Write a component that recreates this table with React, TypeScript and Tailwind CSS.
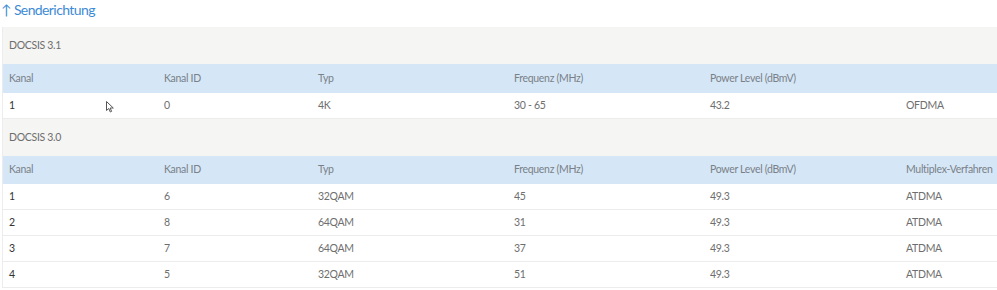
import React from "react";

const cols = ["w-[155px] shrink-0", "w-[154px] shrink-0", "w-[196px] shrink-0", "w-[196px] shrink-0", "w-[196px] shrink-0", "flex-1"];
const headers = ["Kanal", "Kanal ID", "Typ", "Frequenz (MHz)", "Power Level (dBmV)"];

function HeaderRow({ last, h }: { last: string; h: string }) {
  const cells = [...headers, last];
  return (
    <div className={`flex ${h} items-center bg-[#d5e7f6] text-[#7a8088]`}>
      {cells.map((c, i) => (
        <div key={i} className={`${cols[i]} pl-[6px] whitespace-nowrap`}>{c}</div>
      ))}
    </div>
  );
}

function DataRow({ cells, cursor }: { cells: string[]; cursor?: boolean }) {
  return (
    <div className="relative flex h-[26px] items-center border-b border-[#ececec] bg-white text-[#6e6e6e]">
      {cells.map((c, i) => (
        <div key={i} className={`${cols[i]} pl-[6px] whitespace-nowrap ${i === 0 ? "text-[#333]" : ""}`}>{c}</div>
      ))}
      {cursor && (
        <svg className="absolute left-[103px] top-[8px]" width="8" height="12" viewBox="0 0 8 12">
          <path d="M0.5 0.5 L0.5 9.5 L2.8 7.5 L4.3 11 L5.6 10.4 L4.2 7 L7.3 7 Z" fill="white" stroke="#555" strokeWidth="1" />
        </svg>
      )}
    </div>
  );
}

function Section({ title }: { title: string }) {
  return (
    <div className="flex h-[37px] items-center bg-[#f5f5f3] pl-[6px] text-[#6e6e6e]">{title}</div>
  );
}

export default function App() {
  return (
    <div className="w-[997px] h-[290px] bg-white overflow-hidden text-[10.5px] tracking-[-0.3px]" style={{ fontFamily: "Lato, 'Open Sans', sans-serif" }}>
      <div className="pl-[1px] h-[27px] text-[14px] leading-[19px] tracking-[-0.6px] text-[#3d8bd5]">↑ Senderichtung</div>
      <div className="ml-[2px] border-l border-[#ececec]">
        <Section title="DOCSIS 3.1" />
        <HeaderRow last="" h="h-[29px]" />
        <DataRow cells={["1", "0", "4K", "30 - 65", "43.2", "OFDMA"]} cursor />
        <Section title="DOCSIS 3.0" />
        <HeaderRow last="Multiplex-Verfahren" h="h-[28px]" />
        <DataRow cells={["1", "6", "32QAM", "45", "49.3", "ATDMA"]} />
        <DataRow cells={["2", "8", "64QAM", "31", "49.3", "ATDMA"]} />
        <DataRow cells={["3", "7", "64QAM", "37", "49.3", "ATDMA"]} />
        <DataRow cells={["4", "5", "32QAM", "51", "49.3", "ATDMA"]} />
      </div>
    </div>
  );
}
